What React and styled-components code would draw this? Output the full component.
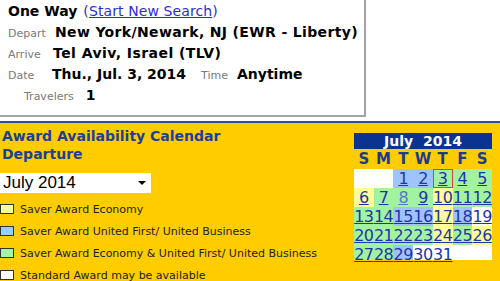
import React from "react";
import styled, { createGlobalStyle } from "styled-components";

const Global = createGlobalStyle`
  html, body { margin: 0; padding: 0; background: #fff; }
  body { font-family: "DejaVu Sans", Verdana, sans-serif; }
`;

const Page = styled.div`
  width: 500px;
  height: 281px;
  overflow: hidden;
  background: #fff;
`;

const Top = styled.div`
  height: 121px;
  background: #fff;
`;

const SearchBox = styled.div`
  width: 356px;
  height: 114px;
  padding: 1px 0 0 8px;
  border-right: 2px solid #a3a3a3;
  border-bottom: 2px solid #a3a3a3;
  box-sizing: content-box;
`;

const Line = styled.div`
  display: flex;
  align-items: baseline;
  height: 21px;
  line-height: 21px;
  padding-left: ${(p) => p.$indent || 0}px;
  white-space: nowrap;
`;

const Title = styled.span`
  font-size: 14px;
  font-weight: bold;
  color: #000;
  margin-right: 6px;
`;

const Paren = styled.span`
  font-size: 14px;
  color: #2a2fd0;
  letter-spacing: 0.1px;
`;

const LinkText = styled.a`
  color: #2a2fd0;
  text-decoration: underline;
`;

const Label = styled.span`
  font-size: 11px;
  color: #7a7a7a;
  width: ${(p) => (p.$w ? `${p.$w}px` : "auto")};
  margin-right: ${(p) => p.$mr || 0}px;
  flex: none;
`;

const Value = styled.span`
  font-size: 14px;
  font-weight: bold;
  color: #000;
  letter-spacing: ${(p) => p.$ls || 0}px;
  margin-right: ${(p) => p.$mr || 0}px;
`;

const Yellow = styled.div`
  border-top: 2px solid #2b4f9e;
  background: #ffcc00;
  height: 158px;
  display: flex;
`;

const LeftCol = styled.div`
  flex: 1;
  padding: 4px 0 0 2px;
`;

const Heading = styled.h2`
  margin: 0;
  font-size: 14px;
  line-height: 18px;
  font-weight: bold;
  color: #1e3f94;
`;

const SelectBox = styled.div`
  margin: 10px 0 5px -2px;
  width: 151px;
  height: 20px;
  background: #fff;
  display: flex;
  align-items: center;
  justify-content: space-between;
  padding: 0 5px 0 3px;
  box-sizing: border-box;
  font-family: "Liberation Sans", Arial, sans-serif;
  font-size: 17px;
  color: #000;
`;

const Legend = styled.div`
  margin-left: -2px;
`;

const LegendRow = styled.div`
  height: 22px;
  display: flex;
  align-items: center;
  gap: 6px;
  font-size: 11px;
  color: #222;
  white-space: nowrap;
`;

const Swatch = styled.span`
  width: 12px;
  height: 8px;
  border: 1px solid #333;
  background: ${(p) => p.$c};
  flex: none;
`;

const Calendar = styled.div`
  margin: 10px 8px 0 0;
  width: 138px;
`;

const CalHead = styled.div`
  height: 16px;
  line-height: 16px;
  background: #0a3392;
  color: #fff;
  font-weight: bold;
  font-size: 14px;
  text-align: center;
  white-space: pre;
`;

const Grid = styled.div`
  display: grid;
  grid-template-columns: repeat(7, 1fr);
  grid-template-rows: ${(p) => p.$rows};
`;

const Dow = styled.div`
  text-align: center;
  font-weight: bold;
  font-size: 15px;
  line-height: 20px;
  color: #1e3c8c;
`;

const colors = {
  w: "#ffffff",
  b: "#9fc3ff",
  g: "#a2f3a0",
  y: "#ffff99",
};

const Cell = styled.div`
  background: ${(p) => colors[p.$t]};
  text-align: center;
  font-size: 16px;
  line-height: 19px;
  letter-spacing: -0.5px;
  overflow: visible;
  white-space: nowrap;
  box-shadow: ${(p) => (p.$sel ? "inset 0 0 0 1px #e0452c" : "none")};
`;

const DayLink = styled.a`
  color: ${(p) => (p.$light ? "#5577cc" : "#1f35a8")};
  text-decoration: underline;
`;

const days = [
  [null, "w"], [null, "w"], [1, "b"], [2, "b"], [3, "g"], [4, "g"], [5, "g"],
  [6, "y"], [7, "g"], [8, "g"], [9, "g"], [10, "y"], [11, "g"], [12, "g"],
  [13, "g"], [14, "g"], [15, "b"], [16, "b"], [17, "y"], [18, "b"], [19, "w"],
  [20, "g"], [21, "g"], [22, "g"], [23, "g"], [24, "y"], [25, "g"], [26, "y"],
  [27, "g"], [28, "g"], [29, "b"], [30, "w"], [31, "w"], [null, "w"], [null, "w"],
];

const legend = [
  ["#ffff99", "Saver Award Economy"],
  ["#99ccff", "Saver Award United First/ United Business"],
  ["#a2f7a2", "Saver Award Economy & United First/ United Business"],
  ["#ffffff", "Standard Award may be available"],
];

export default function App() {
  return (
    <Page>
      <Global />
      <Top>
        <SearchBox>
          <Line>
            <Title>One Way</Title>
            <Paren>
              (<LinkText href="#">Start New Search</LinkText>)
            </Paren>
          </Line>
          <Line>
            <Label $w={47}>Depart</Label>
            <Value $ls={0.35}>New York/Newark, NJ (EWR - Liberty)</Value>
          </Line>
          <Line>
            <Label $w={45}>Arrive</Label>
            <Value $ls={0.45}>Tel Aviv, Israel (TLV)</Value>
          </Line>
          <Line>
            <Label $w={44}>Date</Label>
            <Value $mr={15}>Thu., Jul. 3, 2014</Value>
            <Label $mr={9}>Time</Label>
            <Value>Anytime</Value>
          </Line>
          <Line $indent={16}>
            <Label $mr={12}>Travelers</Label>
            <Value>1</Value>
          </Line>
        </SearchBox>
      </Top>
      <Yellow>
        <LeftCol>
          <Heading>
            Award Availability Calendar
            <br />
            Departure
          </Heading>
          <SelectBox>
            <span>July 2014</span>
            <svg width="8" height="4" viewBox="0 0 8 4">
              <path d="M0 0 L8 0 L4 4 Z" fill="#000" />
            </svg>
          </SelectBox>
          <Legend>
            {legend.map(([c, t]) => (
              <LegendRow key={t}>
                <Swatch $c={c} />
                {t}
              </LegendRow>
            ))}
          </Legend>
        </LeftCol>
        <Calendar>
          <CalHead>{"July  2014"}</CalHead>
          <Grid $rows="20px">
            {["S", "M", "T", "W", "T", "F", "S"].map((d, i) => (
              <Dow key={i}>{d}</Dow>
            ))}
          </Grid>
          <Grid $rows="19px 19px 19px 19px 15px">
            {days.map(([n, t], i) => (
              <Cell key={i} $t={t} $sel={n === 3}>
                {n && (
                  <DayLink href="#" $light={n === 8}>
                    {n}
                  </DayLink>
                )}
              </Cell>
            ))}
          </Grid>
        </Calendar>
      </Yellow>
    </Page>
  );
}
